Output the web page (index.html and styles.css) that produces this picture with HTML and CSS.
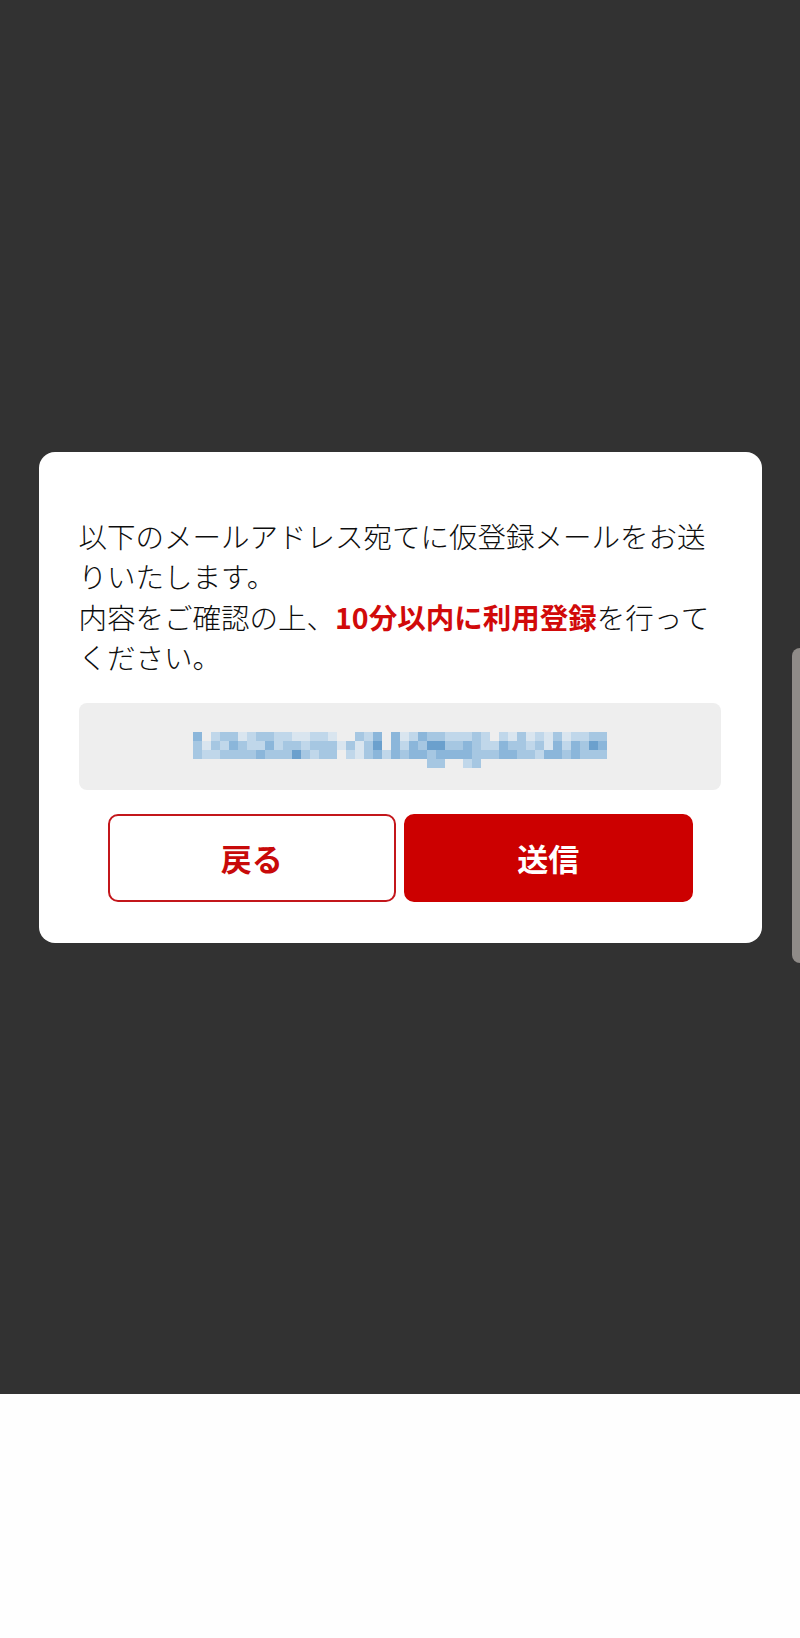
FILE: index.html
```html
<!DOCTYPE html>
<html lang="ja">
<head>
  <meta charset="UTF-8">
  <meta name="viewport" content="width=device-width, initial-scale=1.0">
  <title>仮登録メール送信</title>
  <link rel="stylesheet" href="styles.css">
</head>
<body>

  <div class="overlay">
    <div class="modal">
      <p class="message">
        以下のメールアドレス宛てに仮登録メールをお送りいたします。<br>
        内容をご確認の上、<strong class="accent">10分以内に利用登録</strong>を行ってください。
      </p>

      <div class="email-box">
        <div class="mosaic" id="mosaic"></div>
      </div>

      <div class="buttons">
        <button class="btn btn-back" type="button">戻る</button>
        <button class="btn btn-send" type="button">送信</button>
      </div>
    </div>
    <div class="scroll-thumb"></div>
  </div>

  <script src="mosaic.js"></script>
</body>
</html>
```

FILE: styles.css
```css
body {
  margin: 0;
  background-color: #fefefe;
  font-family: "Noto Sans CJK JP", "Noto Sans", sans-serif;
  color: #0d0d0d;
}
.overlay {
  position: relative;
  height: 1394px;
  background-color: #323232;
  display: flex;
  align-items: center;
  justify-content: center;
}
.modal {
  width: 723px;
  box-sizing: border-box;
  background-color: #ffffff;
  border-radius: 16px;
  padding: 64px 41px 41px 40px;
}
.message {
  margin: 0 0 25px;
  font-size: 28.5px;
  line-height: 40.5px;
  font-weight: 300;
}
.accent {
  color: #d10a0a;
  font-weight: 700;
}
.email-box {
  height: 87px;
  background-color: #eeeeee;
  border-radius: 8px;
  display: flex;
  align-items: center;
  justify-content: center;
}
.mosaic {
  display: grid;
  grid-template-columns: repeat(46, 9px);
  grid-auto-rows: 9px;
  padding-top: 8px;
}
.mosaic span.c0 { background-color: #eeeeee; }
.mosaic span.c1 { background-color: #d9e5ef; }
.mosaic span.c2 { background-color: #c0d7ea; }
.mosaic span.c3 { background-color: #a6c7e2; }
.mosaic span.c4 { background-color: #8bb6da; }
.mosaic span.c5 { background-color: #6ba0cd; }
.buttons {
  display: flex;
  gap: 8px;
  margin: 24px 28px 0 29px;
}
.btn {
  flex: 1;
  height: 88px;
  border-radius: 10px;
  font-family: inherit;
  font-size: 31px;
  font-weight: 700;
  cursor: pointer;
}
.btn-back {
  background-color: #ffffff;
  border: 2px solid #c3161b;
  color: #c80a0a;
}
.btn-send {
  background-color: #cc0000;
  border: 2px solid #cc0000;
  color: #ffffff;
}
.scroll-thumb {
  position: absolute;
  right: 0;
  top: 648px;
  width: 8px;
  height: 315px;
  background-color: #8f8b88;
  border-radius: 8px 0 0 8px;
}
```

FILE: mosaic.js
```js
// pixelated (blurred) mail address, one digit per 9px cell
const rows = [
  "4023312332211221003240412433222320213121312233",
  "3132432242332333131350424355334322433231424354",
  "3223333433353233021342434434444333443324434333",
  "0000000000000000000000000033002300000000000000"
];

const mosaic = document.getElementById('mosaic');
rows.forEach(row => {
  row.split('').forEach(level => {
    const cell = document.createElement('span');
    cell.className = 'c' + level;
    mosaic.appendChild(cell);
  });
});
```
